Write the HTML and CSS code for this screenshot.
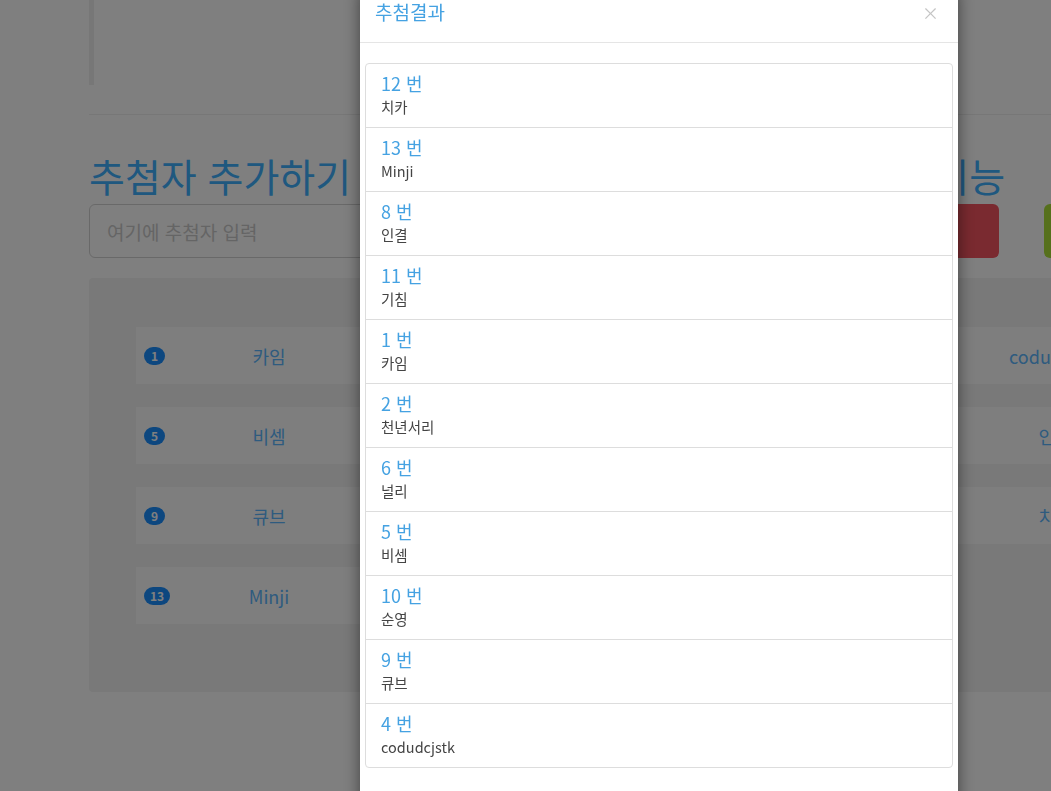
FILE: index.html
```html
<!DOCTYPE html>
<html lang="ko">
<head>
    <meta charset="UTF-8">
    <meta name="viewport" content="width=device-width, initial-scale=1.0">
    <title>추첨기</title>
    <link rel="stylesheet" href="styles.css">
</head>
<body>
    <div class="page">
        <div class="note"></div>
        <hr class="line">

        <div class="top">
            <div class="col-add">
                <h1 class="title">추첨자 추가하기</h1>
                <input class="name-input" type="text" placeholder="여기에 추첨자 입력">
            </div>
            <div class="col-draw">
                <h1 class="title">랜덤 추첨 기능</h1>
                <div class="btns">
                    <a class="btn btn-red" href="javascript:;"></a>
                    <a class="btn btn-green" href="javascript:;"></a>
                </div>
            </div>
        </div>

        <div class="well">
            <div class="people-row">
                <div class="cell"><span class="badge">1</span><span class="name">카임</span></div>
                <div class="cell"><span class="badge">2</span><span class="name">천년서리</span></div>
                <div class="cell"><span class="badge">3</span><span class="name">하랑</span></div>
                <div class="cell"><span class="badge">4</span><span class="name">codudcjstk</span></div>
            </div>
            <div class="people-row">
                <div class="cell"><span class="badge">5</span><span class="name">비셈</span></div>
                <div class="cell"><span class="badge">6</span><span class="name">널리</span></div>
                <div class="cell"><span class="badge">7</span><span class="name">도윤</span></div>
                <div class="cell"><span class="badge">8</span><span class="name">인결</span></div>
            </div>
            <div class="people-row">
                <div class="cell"><span class="badge">9</span><span class="name">큐브</span></div>
                <div class="cell"><span class="badge">10</span><span class="name">순영</span></div>
                <div class="cell"><span class="badge">11</span><span class="name">기침</span></div>
                <div class="cell"><span class="badge">12</span><span class="name">치카</span></div>
            </div>
            <div class="people-row">
                <div class="cell"><span class="badge">13</span><span class="name">Minji</span></div>
            </div>
        </div>
    </div>

    <!-- 추첨결과 모달 -->
    <div class="backdrop"></div>
    <div class="modal">
        <div class="modal-dialog">
            <div class="modal-header">
                <h4 class="modal-title">추첨결과</h4>
                <span class="close">&times;</span>
            </div>
            <div class="modal-body">
                <ul class="list-group">
                    <li class="list-item"><h4 class="item-head">12 번</h4><p class="item-text">치카</p></li>
                    <li class="list-item"><h4 class="item-head">13 번</h4><p class="item-text">Minji</p></li>
                    <li class="list-item"><h4 class="item-head">8 번</h4><p class="item-text">인결</p></li>
                    <li class="list-item"><h4 class="item-head">11 번</h4><p class="item-text">기침</p></li>
                    <li class="list-item"><h4 class="item-head">1 번</h4><p class="item-text">카임</p></li>
                    <li class="list-item"><h4 class="item-head">2 번</h4><p class="item-text">천년서리</p></li>
                    <li class="list-item"><h4 class="item-head">6 번</h4><p class="item-text">널리</p></li>
                    <li class="list-item"><h4 class="item-head">5 번</h4><p class="item-text">비셈</p></li>
                    <li class="list-item"><h4 class="item-head">10 번</h4><p class="item-text">순영</p></li>
                    <li class="list-item"><h4 class="item-head">9 번</h4><p class="item-text">큐브</p></li>
                    <li class="list-item"><h4 class="item-head">4 번</h4><p class="item-text">codudcjstk</p></li>
                </ul>
            </div>
        </div>
    </div>
</body>
</html>
```

FILE: styles.css
```css
* {
    margin: 0;
    padding: 0;
    box-sizing: border-box;
}
body {
    font-family: "Noto Sans CJK KR", "Noto Sans", sans-serif;
    font-size: 14px;
    color: #333;
    background-color: #fff;
    overflow: hidden;
    height: 791px;
}
.page {
    width: 1300px;
    padding-left: 89px;
}
.note {
    height: 85px;
    border-left: 5px solid #eee;
}
.line {
    border: 0;
    border-top: 1px solid #eee;
    margin: 29px 0 40px;
}
.top {
    display: flex;
}
.col-add {
    width: 679px;
}
.col-draw {
    width: 520px;
}
.title {
    font-size: 39px;
    line-height: 40px;
    font-weight: normal;
    color: #3fb0ff;
    margin-bottom: 9px;
    white-space: nowrap;
}
.name-input {
    display: block;
    width: 640px;
    height: 54px;
    padding: 0 17px;
    font-family: inherit;
    font-size: 19px;
    border: 1px solid #d2d2d2;
    border-radius: 6px;
    outline: none;
}
.name-input::placeholder {
    color: #cacaca;
}
.btns {
    display: flex;
    gap: 45px;
}
.btn {
    display: block;
    width: 231px;
    height: 54px;
    border-radius: 6px;
}
.btn-red {
    background-color: #f45460;
}
.btn-green {
    background-color: #ace038;
}
.well {
    margin-top: 20px;
    width: 1200px;
    height: 414px;
    padding: 49px 0 0 47px;
    background-color: #f3f3f3;
    border-radius: 4px;
    display: flex;
    flex-direction: column;
    gap: 23px;
}
.people-row {
    display: grid;
    grid-template-columns: repeat(4, 262px);
}
.cell {
    height: 57px;
    background-color: #fcfcfc;
    display: grid;
    align-items: center;
    padding-left: 8px;
}
.cell > * {
    grid-area: 1 / 1;
}
.badge {
    justify-self: start;
    min-width: 21px;
    height: 18px;
    line-height: 18px;
    padding: 0 6px;
    border-radius: 10px;
    background-color: #1a8eff;
    color: #fff;
    font-size: 12px;
    font-weight: bold;
    text-align: center;
}
.name {
    justify-self: center;
    margin-right: 4px;
    font-size: 18px;
    color: #5cb6fe;
}

/* 모달 */
.backdrop {
    position: fixed;
    top: 0;
    left: 0;
    right: 0;
    bottom: 0;
    background-color: #000;
    opacity: 0.5;
}
.modal {
    position: fixed;
    top: 0;
    left: 0;
    right: 0;
    bottom: 0;
    overflow: hidden;
}
.modal-dialog {
    width: 598px;
    margin: -14px 0 0 360px;
    background-color: #fff;
    box-shadow: 0 5px 15px rgba(0, 0, 0, 0.5);
    height: 830px;
}
.modal-header {
    display: flex;
    justify-content: space-between;
    align-items: center;
    padding: 13px 17px 17px 15px;
    border-bottom: 1px solid #e5e5e5;
}
.modal-title {
    font-size: 19px;
    line-height: 26px;
    font-weight: normal;
    color: #45a2e2;
}
.close {
    font-size: 17px;
    line-height: 1;
    color: #c4c4c4;
    margin-right: 2px;
}
.modal-body {
    padding: 20px 5px;
}
.list-group {
    list-style: none;
}
.list-item {
    padding: 9px 15px 10px;
    border: 1px solid #ddd;
    margin-bottom: -1px;
}
.list-item:first-child {
    border-radius: 4px 4px 0 0;
}
.list-item:last-child {
    border-radius: 0 0 4px 4px;
    margin-bottom: 0;
}
.item-head {
    font-size: 18px;
    line-height: 20px;
    font-weight: normal;
    color: #45a2e2;
    margin-bottom: 4px;
}
.item-text {
    font-size: 14.5px;
    line-height: 20px;
    color: #444;
}
```
